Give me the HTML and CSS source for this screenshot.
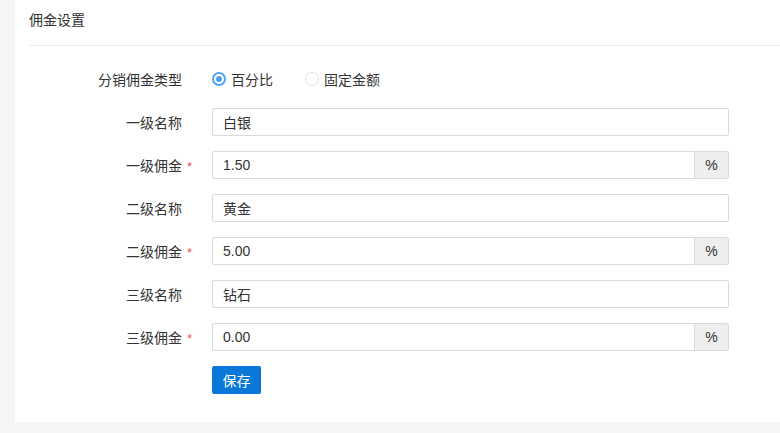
FILE: index.html
```
<!DOCTYPE html>
<html>
    <head>
        <meta charset="utf-8">
        <meta name="viewport" content="width=device-width, initial-scale=1.0">
        <link rel="stylesheet" href="styles.css">
    </head>
    <body>
        <div class="panel">
            <div class="panelTitle">佣金设置</div>
            <div class="form">
                <div class="row">
                    <div class="label">分销佣金类型</div>
                    <div class="radios">
                        <label class="radio"><span class="dot checked"></span>百分比</label>
                        <label class="radio"><span class="dot"></span>固定金额</label>
                    </div>
                </div>
                <div class="row">
                    <div class="label">一级名称</div>
                    <div class="field"><input class="input" value="白银"></div>
                </div>
                <div class="row">
                    <div class="label">一级佣金<span class="star">*</span></div>
                    <div class="field group"><input class="input" value="1.50"><span class="addon">%</span></div>
                </div>
                <div class="row">
                    <div class="label">二级名称</div>
                    <div class="field"><input class="input" value="黄金"></div>
                </div>
                <div class="row">
                    <div class="label">二级佣金<span class="star">*</span></div>
                    <div class="field group"><input class="input" value="5.00"><span class="addon">%</span></div>
                </div>
                <div class="row">
                    <div class="label">三级名称</div>
                    <div class="field"><input class="input" value="钻石"></div>
                </div>
                <div class="row">
                    <div class="label">三级佣金<span class="star">*</span></div>
                    <div class="field group"><input class="input" value="0.00"><span class="addon">%</span></div>
                </div>
                <div class="row">
                    <div class="label"></div>
                    <div class="field"><button class="btnSave">保存</button></div>
                </div>
            </div>
        </div>
    </body>
</html>
```
FILE: styles.css
```
body {
    margin: 0;
    background: #f4f5f7;
    font-family: "Liberation Sans", "Noto Sans CJK SC", sans-serif;
    font-size: 14px;
    color: #333;
}
input:focus{outline:none;}
.panel {
    margin-left: 15px;
    height: 422px;
    background: #fff;
    padding-left: 14px;
    box-sizing: border-box;
}
.panelTitle {
    height: 45px;
    line-height: 40px;
    border-bottom: 1px solid #ebebeb;
    color: #333;
}
.form {
    padding-top: 19px;
    display: flex;
    flex-direction: column;
    gap: 15px;
}
.row {
    display: flex;
    align-items: center;
    height: 28px;
}
.label {
    position: relative;
    width: 153px;
    text-align: right;
    margin-right: 30px;
    color: #333;
}
.star {
    position: absolute;
    right: -10px;
    top: 4px;
    color: #f05454;
    font-size: 13px;
}
.radios {
    display: flex;
    gap: 32px;
}
.radio {
    display: flex;
    align-items: center;
    gap: 5px;
    color: #333;
}
.dot {
    width: 12px;
    height: 12px;
    border: 1px solid #e3e3e3;
    border-radius: 50%;
    box-sizing: content-box;
}
.dot.checked {
    width: 6px;
    height: 6px;
    border: 2px solid #52a5f5;
    background: #4a9ff5;
    padding: 2px;
    background-clip: content-box;
}
.field {
    display: flex;
    width: 517px;
}
.input {
    flex: 1;
    min-width: 0;
    height: 28px;
    box-sizing: border-box;
    border: 1px solid #d9d9d9;
    border-radius: 2px;
    padding: 0 10px;
    font-family: inherit;
    font-size: 14px;
    color: #333;
}
.group .input {
    border-radius: 2px 0 0 2px;
}
.addon {
    width: 34px;
    height: 28px;
    box-sizing: border-box;
    border: 1px solid #d9d9d9;
    border-left: none;
    border-radius: 0 3px 3px 0;
    background: #eceeef;
    display: flex;
    align-items: center;
    justify-content: center;
    color: #333;
}
.btnSave {
    width: 49px;
    height: 28px;
    border: none;
    border-radius: 2px;
    background: #0a78d8;
    color: #fff;
    font-family: inherit;
    font-size: 14px;
    padding: 0;
}
```
